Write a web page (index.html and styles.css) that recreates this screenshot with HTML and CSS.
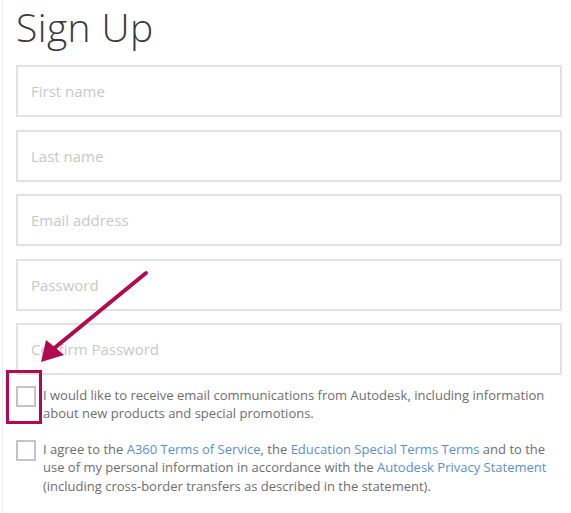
FILE: index.html
```html
<!DOCTYPE html>
<html lang="en">
<head>
  <meta charset="UTF-8" />
  <title>Sign Up</title>
  <meta name="viewport" content="width=device-width, initial-scale=1.0">
  <link rel="stylesheet" href="styles.css">
</head>
<body>
  <div class="page">
    <h1>Sign Up</h1>
    <form class="signup">
      <input class="field" type="text" placeholder="First name">
      <input class="field" type="text" placeholder="Last name">
      <input class="field" type="email" placeholder="Email address">
      <input class="field" type="password" placeholder="Password">
      <input class="field" type="password" placeholder="Confirm Password">

      <label class="check-row first">
        <span class="box"></span>
        <span class="check-text">I would like to receive email communications from Autodesk, including information about new products and special promotions.</span>
      </label>
      <label class="check-row">
        <span class="box"></span>
        <span class="check-text">I agree to the <a href="#">A360 Terms of Service</a>, the <a href="#">Education Special Terms Terms</a> and to the use of my personal information in accordance with the <a href="#">Autodesk Privacy Statement</a> (including cross-border transfers as described in the statement).</span>
      </label>
    </form>

    <!-- annotation drawn over the form -->
    <div class="highlight"></div>
    <svg class="arrow" width="571" height="513" viewBox="0 0 571 513">
      <line x1="145" y1="273" x2="51" y2="350" stroke="#b30a4f" stroke-width="4" stroke-linecap="round"/>
      <polygon points="40,362 45,340 63,355" fill="#b30a4f"/>
    </svg>
  </div>
</body>
</html>
```

FILE: styles.css
```css
body {
  margin: 0;
  background: #fff;
  font-family: "Open Sans", "Liberation Sans", Arial, sans-serif;
  color: #6e6e6e;
}
.page {
  position: relative;
  width: 571px;
  height: 513px;
  overflow: hidden;
  box-sizing: border-box;
  border-left: 1px solid #eee;
  margin-left: 2px;
  padding: 0 11px 0 13px;
}
h1 {
  margin: 0;
  font-size: 39px;
  font-weight: 300;
  line-height: 54px;
  color: #3a3a3a;
  letter-spacing: 0.4px;
}
.signup {
  display: flex;
  flex-direction: column;
  margin-top: 11px;
}
.field {
  height: 52px;
  margin: 0 0 12.5px;
  padding: 0 13px;
  border: 2px solid #e2e2e2;
  background: #fff;
  font-family: inherit;
  font-size: 15px;
  color: #333;
  box-sizing: border-box;
  outline: none;
}
.field::placeholder {
  color: #c8c8c8;
}
.check-row {
  display: flex;
  gap: 7px;
  align-items: flex-start;
  font-size: 13px;
  line-height: 18.5px;
}
.check-row.first {
  margin-top: -2px;
  margin-bottom: 17px;
}
.box {
  flex: none;
  width: 20px;
  height: 21px;
  box-sizing: border-box;
  border: 2px solid #c4c4c4;
  background: #fff;
}
.check-text a {
  color: #5b8fd3;
  text-decoration: none;
}
.highlight {
  position: absolute;
  left: 3px;
  top: 370px;
  width: 36px;
  height: 54px;
  box-sizing: border-box;
  border: 3px solid #b30a4f;
}
.arrow {
  position: absolute;
  left: -2px;
  top: 0;
  pointer-events: none;
}
```
